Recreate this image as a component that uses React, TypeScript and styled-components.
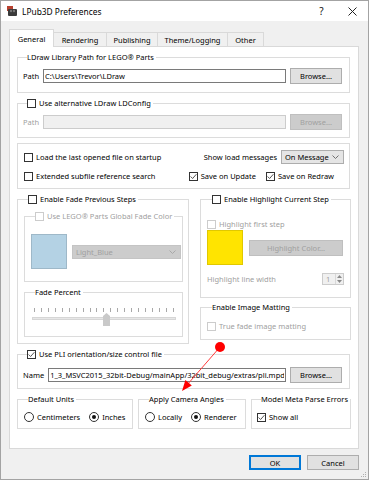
import styled, { createGlobalStyle } from "styled-components";

const UI_FONT = `"Noto Sans", "DejaVu Sans", sans-serif`;

const GlobalStyle = createGlobalStyle`
  html, body { margin: 0; padding: 0; background: #ffffff; }
  body { font-family: ${UI_FONT}; font-size: 7.5px; color: #000; }
  *, *::before, *::after { box-sizing: border-box; }
`;

const Window = styled.div`
  position: relative;
  width: 369px;
  height: 480px;
  border: 1px solid #a3a3a3;
  background: #f0f0f0;
  display: flex;
  flex-direction: column;
  overflow: hidden;
`;

const TitleBar = styled.div`
  height: 20px;
  background: #ffffff;
  display: flex;
  align-items: center;
  padding-left: 6px;
`;

const TitleText = styled.span`
  margin-left: 5px;
  font-size: 8.4px;
  white-space: nowrap;
`;

const TitleButtons = styled.div`
  margin-left: auto;
  display: flex;
  height: 100%;
`;

const TitleButton = styled.div`
  width: 31px;
  height: 100%;
  display: flex;
  align-items: center;
  justify-content: center;
  font-size: 10px;
  color: #111;
`;

const Body = styled.div`
  flex: 1;
  display: flex;
  flex-direction: column;
  padding: 8px 9px 0 8px;
`;

const TabBar = styled.div`
  display: flex;
  align-items: flex-end;
  height: 17px;
`;

const Tab = styled.div<{ $active?: boolean; $w: number }>`
  position: relative;
  z-index: ${(p) => (p.$active ? 1 : 0)};
  width: ${(p) => p.$w}px;
  height: ${(p) => (p.$active ? 18 : 14)}px;
  margin-bottom: ${(p) => (p.$active ? -1 : 0)}px;
  & + & { margin-left: -1px; }
  border: 1px solid #d9d9d9;
  border-bottom: none;
  background: ${(p) => (p.$active ? "#ffffff" : "#f0f0f0")};
  display: flex;
  align-items: center;
  justify-content: center;
  padding-top: ${(p) => (p.$active ? 0 : 1)}px;
  white-space: nowrap;
`;

const Panel = styled.div`
  height: 403px;
  background: #ffffff;
  border: 1px solid #d9d9d9;
  padding: 5px 8px 0 7px;
  display: flex;
  flex-direction: column;
  gap: 5px;
`;

const Group = styled.fieldset<{ $pad: string; $w?: number; $gap?: number }>`
  margin: 0;
  min-width: 0;
  padding: ${(p) => p.$pad};
  border: 1px solid #dcdcdc;
  display: flex;
  flex-direction: column;
  gap: ${(p) => p.$gap ?? 0}px;
  ${(p) => (p.$w ? `width: ${p.$w}px; flex: none;` : "")}
`;

const Caption = styled.legend<{ $inset?: number }>`
  display: flex;
  align-items: center;
  height: 10px;
  line-height: 10px;
  padding: 0 2px 0 0;
  margin-left: ${(p) => p.$inset ?? 4}px;
  white-space: nowrap;
`;

const Row = styled.div<{ $h?: number; $gap?: number }>`
  display: flex;
  align-items: center;
  height: ${(p) => p.$h ?? 12}px;
  gap: ${(p) => p.$gap ?? 4}px;
  white-space: nowrap;
`;

const Text = styled.span<{ $disabled?: boolean }>`
  color: ${(p) => (p.$disabled ? "#a0a0a0" : "#000000")};
  line-height: 10px;
  white-space: nowrap;
`;

const TextField = styled.input`
  flex: 1;
  min-width: 0;
  height: 14px;
  margin: 0;
  padding: 0 1px;
  font: inherit;
  color: #000;
  background: #ffffff;
  border: 1px solid #7a7a7a;
  outline: none;
  &:disabled {
    background: #f0f0f0;
    border-color: #cccccc;
  }
`;

const PushButton = styled.button<{ $w: number; $h?: number; $default?: boolean }>`
  width: ${(p) => p.$w}px;
  height: ${(p) => p.$h ?? 16}px;
  flex: none;
  margin: 0;
  padding: 0;
  font: inherit;
  color: #000;
  background: #e1e1e1;
  border: 1px solid ${(p) => (p.$default ? "#0078d7" : "#adadad")};
  box-shadow: ${(p) => (p.$default ? "inset 0 0 0 1px #0078d7" : "none")};
  &:disabled {
    color: #a0a0a0;
    background: #cccccc;
    border-color: #bfbfbf;
  }
`;

const ComboBox = styled.div<{ $w: number; $disabled?: boolean }>`
  width: ${(p) => p.$w}px;
  height: 14px;
  flex: none;
  display: flex;
  align-items: center;
  justify-content: space-between;
  padding: 0 4px 0 3px;
  background: ${(p) => (p.$disabled ? "#cccccc" : "#e5e5e5")};
  border: 1px solid ${(p) => (p.$disabled ? "#c4c4c4" : "#adadad")};
  color: ${(p) => (p.$disabled ? "#a0a0a0" : "#000")};
`;

const CheckLabel = styled.span<{ $disabled?: boolean }>`
  display: inline-flex;
  align-items: center;
  gap: 3px;
  white-space: nowrap;
  line-height: 10px;
  color: ${(p) => (p.$disabled ? "#a0a0a0" : "#000")};
`;

const CheckBoxMark = styled.span<{ $disabled?: boolean }>`
  width: 9px;
  height: 9px;
  flex: none;
  display: flex;
  align-items: center;
  justify-content: center;
  background: #ffffff;
  border: 1px solid ${(p) => (p.$disabled ? "#cccccc" : "#333333")};
`;

const RadioMark = styled.span`
  width: 10px;
  height: 10px;
  flex: none;
  border-radius: 50%;
  border: 1px solid #333333;
  background: #ffffff;
  display: flex;
  align-items: center;
  justify-content: center;
`;

const RadioDot = styled.span`
  width: 4px;
  height: 4px;
  border-radius: 50%;
  background: #111;
`;

const Swatch = styled.div<{ $color: string }>`
  width: 36px;
  height: 35px;
  flex: none;
  background: ${(p) => p.$color};
  border: 1px solid rgba(0, 0, 0, 0.12);
`;

const TwoColumns = styled.div`
  display: grid;
  grid-template-columns: 172px 151px;
  column-gap: 11px;
  align-items: start;
`;

const Column = styled.div<{ $gap: number }>`
  display: flex;
  flex-direction: column;
  gap: ${(p) => p.$gap}px;
`;

const OptionsGrid = styled.div`
  display: flex;
  justify-content: space-between;
`;

const OptionStack = styled.div<{ $align?: string }>`
  display: flex;
  flex-direction: column;
  align-items: ${(p) => p.$align ?? "flex-start"};
  gap: 5px;
`;

const SliderTrack = styled.div`
  position: relative;
  height: 20px;
  margin: 0 0 0 1px;
`;

const Ticks = styled.div`
  display: flex;
  justify-content: space-between;
  padding: 2px 2px 0;
  height: 7px;
`;

const Tick = styled.span`
  width: 1px;
  height: 4px;
  background: #a8a8a8;
`;

const Groove = styled.div`
  margin-top: 4px;
  height: 3px;
  background: #e7e7e7;
  border: 1px solid #d6d6d6;
`;

const Handle = styled.svg<{ $left: number }>`
  position: absolute;
  left: ${(p) => p.$left}px;
  top: 7px;
`;

const SpinBox = styled.div`
  width: 22px;
  height: 12px;
  flex: none;
  border: 1px solid #cccccc;
  background: #f0f0f0;
  display: flex;
  align-items: center;
  justify-content: space-between;
  padding-left: 3px;
  color: #a0a0a0;
  margin-left: auto;
`;

const SpinArrows = styled.div`
  width: 8px;
  height: 100%;
  border-left: 1px solid #d8d8d8;
  display: flex;
  flex-direction: column;
  align-items: center;
  justify-content: space-around;
`;

const UnitsRow = styled.div`
  display: flex;
  gap: 5px;
`;

const ButtonRow = styled.div`
  display: flex;
  justify-content: flex-end;
  gap: 6px;
  margin-top: 6px;
`;

const Overlay = styled.svg`
  position: absolute;
  left: 0;
  top: 0;
  pointer-events: none;
`;

const SizeGrip = styled.svg`
  position: absolute;
  right: 1px;
  bottom: 1px;
`;

function CheckBox({ label, checked, disabled }: { label?: string; checked?: boolean; disabled?: boolean }) {
  return (
    <CheckLabel $disabled={disabled}>
      <CheckBoxMark $disabled={disabled}>
        {checked && (
          <svg width="7" height="7" viewBox="0 0 7 7">
            <polyline points="0.6,3.5 2.6,5.5 6.4,1.2" fill="none" stroke="#444" strokeWidth="0.9" />
          </svg>
        )}
      </CheckBoxMark>
      {label}
    </CheckLabel>
  );
}

function Radio({ label, checked }: { label: string; checked?: boolean }) {
  return (
    <CheckLabel>
      <RadioMark>{checked && <RadioDot />}</RadioMark>
      {label}
    </CheckLabel>
  );
}

function Chevron({ color }: { color: string }) {
  return (
    <svg width="7" height="4" viewBox="0 0 7 4">
      <polyline points="0.5,0.5 3.5,3.5 6.5,0.5" fill="none" stroke={color} strokeWidth="1" />
    </svg>
  );
}

const tabs: [string, number][] = [
  ["General", 45],
  ["Rendering", 54],
  ["Publishing", 52],
  ["Theme/Logging", 71],
  ["Other", 37],
];

export default function App() {
  return (
    <>
      <GlobalStyle />
      <Window>
        <TitleBar>
          <svg width="10" height="10" viewBox="0 0 10 10">
            <rect x="0" y="0" width="6" height="5" fill="#b8412f" />
            <rect x="1" y="3" width="9" height="7" rx="1" fill="#3a3a3a" />
            <circle cx="4" cy="5" r="1.2" fill="#777" />
            <circle cx="7" cy="5" r="1.2" fill="#777" />
          </svg>
          <TitleText>LPub3D Preferences</TitleText>
          <TitleButtons>
            <TitleButton>?</TitleButton>
            <TitleButton>
              <svg width="9" height="9" viewBox="0 0 9 9">
                <path d="M0.5 0.5 L8.5 8.5 M8.5 0.5 L0.5 8.5" stroke="#222" strokeWidth="1" />
              </svg>
            </TitleButton>
          </TitleButtons>
        </TitleBar>

        <Body>
          <TabBar>
            {tabs.map(([name, w], i) => (
              <Tab key={name} $w={w} $active={i === 0}>
                {name}
              </Tab>
            ))}
          </TabBar>

          <Panel>
            <Group $pad="6px 7px 8px 5px">
              <Caption>LDraw Library Path for LEGO® Parts</Caption>
              <Row $h={16}>
                <Text>Path</Text>
                <TextField readOnly defaultValue="C:\Users\Trevor\LDraw" />
                <PushButton $w={52}>Browse...</PushButton>
              </Row>
            </Group>

            <Group $pad="6px 7px 7px 5px">
              <Caption>
                <CheckBox label="Use alternative LDraw LDConfig" />
              </Caption>
              <Row $h={16}>
                <Text $disabled>Path</Text>
                <TextField disabled />
                <PushButton $w={52} disabled>
                  Browse...
                </PushButton>
              </Row>
            </Group>

            <Group $pad="6px 5px 5px 6px">
              <OptionsGrid>
                <OptionStack>
                  <Row $h={14}>
                    <CheckBox label="Load the last opened file on startup" />
                  </Row>
                  <Row $h={14}>
                    <CheckBox label="Extended subfile reference search" />
                  </Row>
                </OptionStack>
                <OptionStack $align="flex-end">
                  <Row $h={14}>
                    <Text>Show load messages</Text>
                    <ComboBox $w={63}>
                      On Message
                      <Chevron color="#707070" />
                    </ComboBox>
                  </Row>
                  <Row $h={14} $gap={10}>
                    <CheckBox label="Save on Update" checked />
                    <CheckBox label="Save on Redraw" checked />
                    <span />
                  </Row>
                </OptionStack>
              </OptionsGrid>
            </Group>

            <TwoColumns>
              <Group $pad="7px 5px 6px 6px" $gap={5}>
                <Caption>
                  <CheckBox label="Enable Fade Previous Steps" />
                </Caption>
                <Group $pad="13px 5px 12px 6px">
                  <Caption>
                    <CheckBox label="Use LEGO® Parts Global Fade Color" disabled />
                  </Caption>
                  <Row $h={35} $gap={5}>
                    <Swatch $color="#b4d2e4" />
                    <ComboBox $w={109} $disabled>
                      Light_Blue
                      <Chevron color="#a8a8a8" />
                    </ComboBox>
                  </Row>
                </Group>
                <Group $pad="9px 6px 10px 6px">
                  <Caption>Fade Percent</Caption>
                  <SliderTrack>
                    <Ticks>
                      {Array.from({ length: 21 }, (_, i) => (
                        <Tick key={i} />
                      ))}
                    </Ticks>
                    <Groove />
                    <Handle $left={71} width="7" height="13" viewBox="0 0 7 13">
                      <polygon points="0,3 3.5,0 7,3 7,13 0,13" fill="#c9c9c9" />
                    </Handle>
                  </SliderTrack>
                </Group>
              </Group>

              <Column $gap={4}>
                <Group $pad="14px 6px 12px 6px">
                  <Caption $inset={5}>
                    <CheckBox label="Enable Highlight Current Step" />
                  </Caption>
                  <Row>
                    <CheckBox label="Highlight first step" disabled />
                  </Row>
                  <Row $h={35} $gap={6}>
                    <Swatch $color="#ffe400" />
                    <PushButton $w={94} disabled>
                      Highlight Color...
                    </PushButton>
                  </Row>
                  <Row style={{ marginTop: 8 }}>
                    <Text $disabled>Highlight line width</Text>
                    <SpinBox>
                      1
                      <SpinArrows>
                        <svg width="5" height="3" viewBox="0 0 5 3">
                          <polygon points="0,3 2.5,0 5,3" fill="#8a8a8a" />
                        </svg>
                        <svg width="5" height="3" viewBox="0 0 5 3">
                          <polygon points="0,0 2.5,3 5,0" fill="#8a8a8a" />
                        </svg>
                      </SpinArrows>
                    </SpinBox>
                  </Row>
                </Group>
                <Group $pad="8px 6px 7px 6px">
                  <Caption $inset={5}>Enable Image Matting</Caption>
                  <Row>
                    <CheckBox label="True fade image matting" disabled />
                  </Row>
                </Group>
              </Column>
            </TwoColumns>

            <Group $pad="8px 7px 5px 5px">
              <Caption>
                <CheckBox label="Use PLI orientation/size control file" checked />
              </Caption>
              <Row $h={16}>
                <Text>Name</Text>
                <TextField readOnly defaultValue="1_3_MSVC2015_32bit-Debug/mainApp/32bit_debug/extras/pli.mpd" />
                <PushButton $w={52}>Browse...</PushButton>
              </Row>
            </Group>

            <UnitsRow>
              <Group $pad="7px 6px 5px 6px" $w={116}>
                <Caption>Default Units</Caption>
                <Row $gap={9}>
                  <Radio label="Centimeters" />
                  <Radio label="Inches" checked />
                </Row>
              </Group>
              <Group $pad="7px 6px 5px 6px" $w={108}>
                <Caption>Apply Camera Angles</Caption>
                <Row $gap={9}>
                  <Radio label="Locally" />
                  <Radio label="Renderer" checked />
                </Row>
              </Group>
              <Group $pad="7px 6px 5px 5px" $w={100}>
                <Caption>Model Meta Parse Errors</Caption>
                <Row>
                  <CheckBox label="Show all" checked />
                </Row>
              </Group>
            </UnitsRow>
          </Panel>

          <ButtonRow>
            <PushButton $w={52} $h={15} $default>
              OK
            </PushButton>
            <PushButton $w={52} $h={15}>
              Cancel
            </PushButton>
          </ButtonRow>
        </Body>

        <SizeGrip width="7" height="7" viewBox="0 0 7 7">
          <rect x="5" y="1" width="1" height="1" fill="#b0b0b0" />
          <rect x="3" y="3" width="1" height="1" fill="#b0b0b0" />
          <rect x="5" y="3" width="1" height="1" fill="#b0b0b0" />
          <rect x="1" y="5" width="1" height="1" fill="#b0b0b0" />
          <rect x="3" y="5" width="1" height="1" fill="#b0b0b0" />
          <rect x="5" y="5" width="1" height="1" fill="#b0b0b0" />
        </SizeGrip>

        <Overlay width="369" height="480" viewBox="0 0 369 480">
          <line x1="219" y1="346" x2="186" y2="384" stroke="#ff3b3b" strokeWidth="1" />
          <polygon points="181,390 184.4,378.9 190.8,384.4" fill="#ff0000" />
          <circle cx="219" cy="346" r="5" fill="#ff0000" />
        </Overlay>
      </Window>
    </>
  );
}
